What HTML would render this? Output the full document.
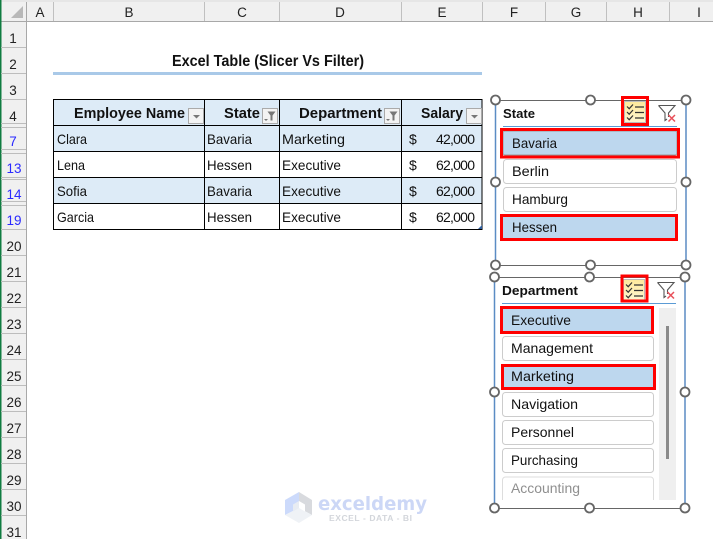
<!DOCTYPE html>
<html><head><meta charset="utf-8"><style>
html,body{margin:0;padding:0;background:#fff;width:713px;height:539px;overflow:hidden}
svg{display:block;font-family:"Liberation Sans",sans-serif}
.h{font-size:13.5px;fill:#222;text-anchor:middle}
.b{font-size:13.5px;fill:#2a2aff;text-anchor:middle}
.d{font-size:14px;fill:#111}
.t{font-size:14.5px;fill:#111;font-weight:bold}
.s{font-size:13px;fill:#111;font-weight:bold}
</style></head><body>
<svg width="713" height="539" viewBox="0 0 713 539" xmlns="http://www.w3.org/2000/svg">
<defs>
<linearGradient id="y" x1="0" y1="0" x2="0" y2="1"><stop offset="0" stop-color="#fde99a"/><stop offset="1" stop-color="#fff6d2"/></linearGradient>
<g id="chk" fill="none" stroke="#333" stroke-width="1.2"><path d="M1 3.500l2.200 2.200L7 1.500M1 9l2.200 2.200L7 7M1 14.500l2.200 2.200L7 12.500"/><path d="M9 4h9M9 9.500h9M9 15h9"/></g>
<g id="clr" fill="none"><path d="M0.500 0.500h16.500l-6.500 7.500v4M0.500 0.500l6.500 7.500v7.500l2-1.500" stroke="#555" stroke-width="1.100"/><path d="M10.500 10l6.500 6.500M17 10l-6.500 6.500" stroke="#e8505a" stroke-width="1.500"/></g>
<g id="dd"><rect x=".5" y=".5" width="15" height="15" fill="#f3f3f3" stroke="#aaa"/><path d="M5 7h7l-3.500 3.500z" fill="#777"/></g>
<g id="ff"><rect x=".5" y=".5" width="15" height="15" fill="#f3f3f3" stroke="#aaa"/><path d="M5.500 3.500h8l-3 4v5h-2v-5z" fill="#777"/><path d="M2 11h4l-2 2z" fill="#777"/></g>
</defs>
<rect x="0" y="0" width="713" height="539" fill="#fff"/>
<!-- headers -->
<rect x="0" y="0" width="713" height="2" fill="#e6e6e6"/>
<rect x="1" y="2" width="712" height="19" fill="#f0f0f0"/>
<rect x="1" y="22" width="25" height="517" fill="#f0f0f0"/>
<rect x="0" y="21" width="713" height="1" fill="#a8a8a8"/>
<rect x="26" y="2" width="1" height="537" fill="#a8a8a8"/>
<rect x="0" y="0" width="1.500" height="539" fill="#107c41"/>
<path d="M23 6v12h-12z" fill="#b8b8b8"/>
<path d="M53.500 2v19M204.500 2v19M279.500 2v19M401.500 2v19M482.500 2v19M545.500 2v19M606.500 2v19M669.500 2v19" stroke="#c0c0c0"/>
<path d="M1 47.500h25M1 73.500h25M1 99.500h25M1 123.500h25M1 127.500h25M1 149.500h25M1 153.500h25M1 177.500h25M1 179.500h25M1 201.500h25M1 205.500h25M1 229.500h25M1 255.500h25M1 281.500h25M1 307.500h25M1 333.500h25M1 359.500h25M1 385.500h25M1 411.500h25M1 437.500h25M1 463.500h25M1 489.500h25M1 515.500h25" stroke="#bdbdbd"/>
<g class="hdr">
<text class="h" x="40" y="17">A</text><text class="h" x="129" y="17">B</text><text class="h" x="242" y="17">C</text><text class="h" x="340" y="17">D</text><text class="h" x="442" y="17">E</text><text class="h" x="514" y="17">F</text><text class="h" x="576" y="17">G</text><text class="h" x="638" y="17">H</text><text class="h" x="699" y="17">I</text>
<text class="h" x="13" y="43">1</text><text class="h" x="13" y="69">2</text><text class="h" x="13" y="95">3</text><text class="h" x="13" y="121">4</text>
<text class="b" x="13" y="146">7</text><text class="b" x="14" y="173">13</text><text class="b" x="14" y="199">14</text><text class="b" x="14" y="225">19</text>
<text class="h" x="14" y="251">20</text><text class="h" x="14" y="277">21</text><text class="h" x="14" y="303">22</text><text class="h" x="14" y="329">23</text><text class="h" x="14" y="355">24</text><text class="h" x="14" y="381">25</text><text class="h" x="14" y="407">26</text><text class="h" x="14" y="433">27</text><text class="h" x="14" y="459">28</text><text class="h" x="14" y="485">29</text><text class="h" x="14" y="511">30</text><text class="h" x="14" y="537">31</text>
</g>
<!-- title -->
<text x="172" y="66" font-size="15.500" font-weight="bold" fill="#111" textLength="192" lengthAdjust="spacingAndGlyphs">Excel Table (Slicer Vs Filter)</text>
<rect x="53" y="72" width="429" height="3" fill="#a9c9e8"/>
<!-- table -->
<rect x="53" y="99" width="429" height="26" fill="#ddebf7"/>
<rect x="53" y="125" width="429" height="26" fill="#ddebf7"/>
<rect x="53" y="177" width="429" height="26" fill="#ddebf7"/>
<path d="M53.500 99v130.500M204.500 99v130.500M279.500 99v130.500M401.500 99v130.500M482 99v130.500M53 99.500h429.500M53 125.500h429.500M53 151.500h429.500M53 177.500h429.500M53 203.500h429.500M53 229.500h429.500" stroke="#000" fill="none"/>
<path d="M482 225v4h-4z" fill="#2f5f9f"/>
<text class="t" x="74" y="118" textLength="111" lengthAdjust="spacingAndGlyphs">Employee Name</text>
<text class="t" x="224" y="118" textLength="36" lengthAdjust="spacingAndGlyphs">State</text>
<text class="t" x="299" y="118" textLength="83" lengthAdjust="spacingAndGlyphs">Department</text>
<text class="t" x="421" y="118" textLength="42" lengthAdjust="spacingAndGlyphs">Salary</text>
<use href="#dd" x="188" y="108"/><use href="#ff" x="262" y="108"/><use href="#ff" x="384" y="108"/><use href="#dd" x="466" y="108"/>
<text class="d" x="57" y="144" textLength="30" lengthAdjust="spacingAndGlyphs">Clara</text>
<text class="d" x="57" y="170" textLength="28" lengthAdjust="spacingAndGlyphs">Lena</text>
<text class="d" x="57" y="196" textLength="30" lengthAdjust="spacingAndGlyphs">Sofia</text>
<text class="d" x="57" y="222" textLength="37" lengthAdjust="spacingAndGlyphs">Garcia</text>
<text class="d" x="207" y="144" textLength="45" lengthAdjust="spacingAndGlyphs">Bavaria</text>
<text class="d" x="207" y="170" textLength="45" lengthAdjust="spacingAndGlyphs">Hessen</text>
<text class="d" x="207" y="196" textLength="45" lengthAdjust="spacingAndGlyphs">Bavaria</text>
<text class="d" x="207" y="222" textLength="45" lengthAdjust="spacingAndGlyphs">Hessen</text>
<text class="d" x="282" y="144" textLength="63" lengthAdjust="spacingAndGlyphs">Marketing</text>
<text class="d" x="282" y="170" textLength="59" lengthAdjust="spacingAndGlyphs">Executive</text>
<text class="d" x="282" y="196" textLength="59" lengthAdjust="spacingAndGlyphs">Executive</text>
<text class="d" x="282" y="222" textLength="59" lengthAdjust="spacingAndGlyphs">Executive</text>
<text class="d" x="409" y="144">$</text><text class="d" x="409" y="170">$</text><text class="d" x="409" y="196">$</text><text class="d" x="409" y="222">$</text>
<text class="d" x="436" y="144" textLength="39" lengthAdjust="spacing">42,000</text>
<text class="d" x="436" y="170" textLength="39" lengthAdjust="spacing">62,000</text>
<text class="d" x="436" y="196" textLength="39" lengthAdjust="spacing">62,000</text>
<text class="d" x="436" y="222" textLength="39" lengthAdjust="spacing">62,000</text>
<!-- watermark -->
<g>
<path d="M299 492l13 8v15l-13-7z" fill="#d8dade"/>
<path d="M299 492l-14 8v15l14-7z" fill="#ccdafb"/>
<path d="M285 515l14-7 13 7-13 8z" fill="#eff2f6"/>
<path d="M299 501l6 3.500v7l-6-3.500z" fill="#fff"/>
<path d="M299 501l-6 3.500v7l6-3.500z" fill="#e8ecf2"/>
<text x="318" y="510" font-size="19" font-weight="bold" fill="#ccd7f6" textLength="109" lengthAdjust="spacingAndGlyphs" font-family="'DejaVu Sans',sans-serif">exceldemy</text>
<text x="329" y="521" font-size="8.500" font-weight="bold" fill="#d3d6db" textLength="83" lengthAdjust="spacing">EXCEL - DATA - BI</text>
</g>
<!-- slicer 1 -->
<rect x="495" y="100" width="191" height="165" fill="#fff"/>
<path d="M495.500 100v165M686 100v165" stroke="#5b8cc4" stroke-width="1.500"/>
<path d="M495 100.500h191M495 265.500h191" stroke="#666"/>
<text class="s" x="503" y="118" textLength="32" lengthAdjust="spacingAndGlyphs">State</text>
<rect x="503" y="126" width="174" height="1" fill="#5b9bd5"/>
<rect x="503.500" y="159.500" width="173" height="24" rx="3" fill="#fff" stroke="#ccc"/>
<rect x="503.500" y="187.500" width="173" height="24" rx="3" fill="#fff" stroke="#ccc"/>
<rect x="503" y="131" width="174" height="24" rx="2" fill="#bdd7ee" stroke="#999"/>
<rect x="501.500" y="129.500" width="177" height="27.500" fill="none" stroke="#f00" stroke-width="3"/>
<rect x="501.500" y="215.500" width="175" height="24" fill="#bdd7ee" stroke="#f00" stroke-width="3"/>
<text class="d" x="512" y="148" textLength="45" lengthAdjust="spacingAndGlyphs">Bavaria</text>
<text class="d" x="512" y="176" textLength="37" lengthAdjust="spacingAndGlyphs">Berlin</text>
<text class="d" x="512" y="204" textLength="56" lengthAdjust="spacingAndGlyphs">Hamburg</text>
<text class="d" x="512" y="232" textLength="45" lengthAdjust="spacingAndGlyphs">Hessen</text>
<rect x="624.500" y="101.500" width="21" height="21" fill="url(#y)" stroke="#bbb"/>
<use href="#chk" x="626" y="103"/>
<rect x="622.500" y="97.500" width="25" height="27" fill="none" stroke="#f00" stroke-width="3"/>
<use href="#clr" x="658" y="105"/>
<!-- slicer 2 -->
<rect x="494" y="277" width="191" height="231" fill="#fff"/>
<path d="M494.500 277v231M685 277v231" stroke="#5b8cc4" stroke-width="1.500"/>
<path d="M494 277.500h191M494 508.500h191" stroke="#666"/>
<text class="s" x="502" y="295" textLength="76" lengthAdjust="spacingAndGlyphs">Department</text>
<rect x="502" y="303" width="174" height="1" fill="#5b9bd5"/>
<rect x="659" y="308" width="17" height="192" fill="#efefef"/>
<rect x="666" y="326" width="3" height="133" fill="#8a8a8a"/>
<rect x="502.500" y="336.500" width="151" height="24" rx="3" fill="#fff" stroke="#ccc"/>
<rect x="502.500" y="392.500" width="151" height="24" rx="3" fill="#fff" stroke="#ccc"/>
<rect x="502.500" y="420.500" width="151" height="24" rx="3" fill="#fff" stroke="#ccc"/>
<rect x="502.500" y="448.500" width="151" height="24" rx="3" fill="#fff" stroke="#ccc"/>
<path d="M502.500 500v-20a3 3 0 0 1 3-3h145a3 3 0 0 1 3 3v20" fill="#fff" stroke="#ddd"/>
<rect x="501.500" y="307.500" width="151" height="25" fill="#bdd7ee" stroke="#f00" stroke-width="3"/>
<rect x="502.500" y="365.500" width="152" height="23" fill="#bdd7ee" stroke="#f00" stroke-width="3"/>
<text class="d" x="511" y="325" textLength="60" lengthAdjust="spacingAndGlyphs">Executive</text>
<text class="d" x="511" y="353" textLength="82" lengthAdjust="spacingAndGlyphs">Management</text>
<text class="d" x="511" y="381" textLength="63" lengthAdjust="spacingAndGlyphs">Marketing</text>
<text class="d" x="511" y="409" textLength="67" lengthAdjust="spacingAndGlyphs">Navigation</text>
<text class="d" x="511" y="437" textLength="63" lengthAdjust="spacingAndGlyphs">Personnel</text>
<text class="d" x="511" y="465" textLength="67" lengthAdjust="spacingAndGlyphs">Purchasing</text>
<text class="d" x="511" y="493" textLength="69" lengthAdjust="spacingAndGlyphs" style="fill:#8f8f8f">Accounting</text>
<rect x="623.500" y="279.500" width="21" height="21" fill="url(#y)" stroke="#bbb"/>
<use href="#chk" x="625" y="281"/>
<rect x="622" y="276" width="25" height="25" fill="none" stroke="#f00" stroke-width="3"/>
<use href="#clr" x="657" y="282"/>
<!-- handles -->
<g fill="#fff" stroke="#666" stroke-width="1.800">
<circle cx="495.500" cy="100" r="4.500"/><circle cx="590.500" cy="100" r="4.500"/><circle cx="686" cy="100" r="4.500"/>
<circle cx="495.500" cy="182" r="4.500"/><circle cx="686" cy="182" r="4.500"/>
<circle cx="495.500" cy="265" r="4.500"/><circle cx="590.500" cy="265" r="4.500"/><circle cx="686" cy="265" r="4.500"/>
<circle cx="494.500" cy="277" r="4.500"/><circle cx="589.500" cy="277" r="4.500"/><circle cx="685" cy="277" r="4.500"/>
<circle cx="494.500" cy="392" r="4.500"/><circle cx="685" cy="392" r="4.500"/>
<circle cx="494.500" cy="508" r="4.500"/><circle cx="589.500" cy="508" r="4.500"/><circle cx="685" cy="508" r="4.500"/>
</g>
</svg>
</body></html>
